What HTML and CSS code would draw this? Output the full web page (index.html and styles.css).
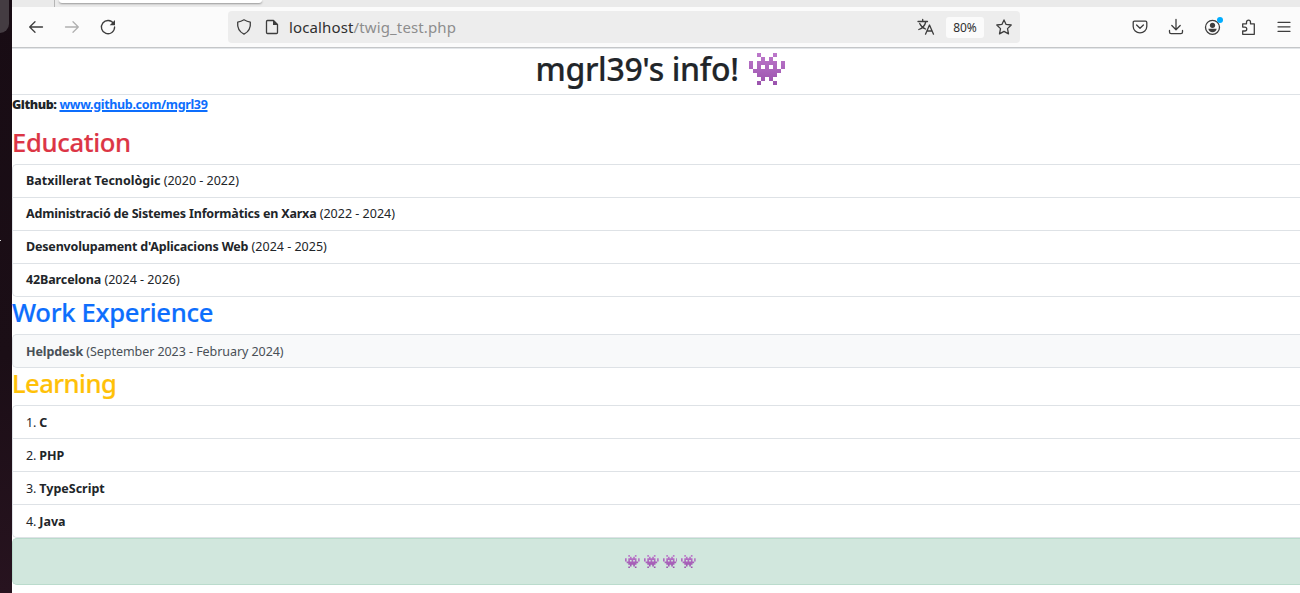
FILE: index.html
```html
<!DOCTYPE html>
<html lang="ca">
<head>
<meta charset="utf-8">
<title>mgrl39's info!</title>
<link rel="stylesheet" href="styles.css">
</head>
<body>
<svg class="defs" aria-hidden="true">
  <defs>
    <linearGradient id="purple" x1="0" y1="0" x2="0" y2="1"><stop offset="0" stop-color="#bd78cb"/><stop offset="1" stop-color="#9a52ad"/></linearGradient>
    <symbol id="invader" viewBox="0 0 9 8" preserveAspectRatio="none">
      <path fill="url(#purple)" d="M2 0h1v1h1v1h1v-1h1v-1h1v1h-1v1h1v2h1v-2h1v2h-1v1h-1v1h-1v1h1v1h-1v-1h-1v-1h-1v1h-1v1h-1v-1h1v-1h-1v-1h-1v-1h-1v-2h1v2h1v-2h1v-1h-1zM3 3v1h1v-1zM5 3v1h1v-1z"/>
    </symbol>
  </defs>
</svg>
<aside class="desktop"><span class="dock"></span><span class="speck"></span></aside>
<div class="browser">
  <div class="tabs"><span class="tab"></span></div>
  <nav class="toolbar">
    <div class="nav-buttons">
      <svg class="icon" viewBox="0 0 16 16"><path d="M14.500 8H2M7 2.700L1.700 8L7 13.300"/></svg>
      <svg class="icon disabled" viewBox="0 0 16 16"><path d="M1.500 8H14M9 2.700L14.300 8L9 13.300"/></svg>
      <svg class="icon" viewBox="0 0 16 16"><path d="M13.600 4.600A6.600 6.600 0 1 0 14.600 8"/><path class="solid" d="M15 1v5.300H9.700z"/></svg>
    </div>
    <div class="urlbar">
      <svg class="icon" viewBox="0 0 16 16"><path d="M8 .8Q11 2.600 14.300 3.100Q15.200 11.500 8 15.200Q.8 11.500 1.700 3.100Q5 2.600 8 .8z"/></svg>
      <svg class="icon page" viewBox="0 0 16 16"><path d="M3.500 1.500H9.500L13.500 5.500V13.500Q13.500 14.500 12.500 14.500H3.500Q2.500 14.500 2.500 13.500V2.500Q2.500 1.500 3.500 1.500z"/><path class="solid" d="M9 1l5 5H9z"/></svg>
      <span class="url"><span class="host">localhost</span>/twig_test.php</span>
      <svg class="icon translate" viewBox="0 0 16 16"><path d="M0 2.500H9.500M4.700 .5V2.500M1.700 4.500Q3.500 8.500 7.500 10M7.700 3Q6.500 8.500 .8 10.500M7.500 15.200L11.500 6L15.500 15.200M8.800 12H14.200"/></svg>
      <span class="zoom">80%</span>
      <svg class="icon" viewBox="0 0 16 16"><path d="M8 .9L10.100 5.400L15.200 6L11.500 9.600L12.500 14.900L8 12.400L3.500 14.900L4.500 9.600L.8 6L5.900 5.400z"/></svg>
    </div>
    <div class="actions">
      <svg class="icon" viewBox="0 0 16 16"><path d="M2.500 2.200H13.500Q14.800 2.200 14.800 3.500V7.500A6.800 6.300 0 0 1 1.200 7.500V3.500Q1.200 2.200 2.500 2.200zM4.600 6L8 9.200L11.400 6"/></svg>
      <svg class="icon" viewBox="0 0 16 16"><path d="M8 .5V10.500M3.800 6.500L8 10.700L12.200 6.500M1.500 11.500V13Q1.500 14.600 3.100 14.600H12.900Q14.500 14.600 14.500 13V11.500"/></svg>
      <span class="account"><svg class="icon" viewBox="0 0 16 16"><circle cx="8.500" cy="8.300" r="7"/><circle class="solid" cx="8.500" cy="6.300" r="2.600"/><path class="solid" d="M4.300 9.800H12.700Q12 13.200 8.500 13.200Q5 13.200 4.300 9.800z"/></svg><i class="badge"></i></span>
      <svg class="icon" viewBox="0 0 16 16"><path d="M2.700 15.300V12H4.800A1.900 1.900 0 0 0 4.800 8.100H2.700V4.800H6.500V3.200A2 2 0 0 1 10.500 3.200V4.800H14.300V15.300z"/></svg>
      <svg class="icon" viewBox="0 0 16 16"><path d="M2 3.300H14M2 7.800H14M2 12.300H14"/></svg>
    </div>
  </nav>
  <main>
    <h1 class="title"><span class="title-text">mgrl39's info!</span><svg class="alien-large"><use href="#invader"/></svg></h1>
    <p class="github"><b class="gh-label">Github:</b> <a class="gh-link" href="#">www.github.com/mgrl39</a></p>
    <h2 class="heading education">Education</h2>
    <ul class="list">
      <li><b>Batxillerat Tecnològic</b> <span>(2020 - 2022)</span></li>
      <li><b class="tight">Administració de Sistemes Informàtics en Xarxa</b> <span>(2022 - 2024)</span></li>
      <li><b class="tight">Desenvolupament d'Aplicacions Web</b> <span>(2024 - 2025)</span></li>
      <li><b class="snug">42Barcelona</b> <span>(2024 - 2026)</span></li>
    </ul>
    <h2 class="heading work">Work Experience</h2>
    <ul class="list light">
      <li><b class="snug">Helpdesk</b> <span class="period">(September 2023 - February 2024)</span></li>
    </ul>
    <h2 class="heading learning">Learning</h2>
    <ol class="list lower">
      <li><span class="num">1.</span> <b>C</b></li>
      <li><span class="num">2.</span> <b>PHP</b></li>
      <li><span class="num">3.</span> <b>TypeScript</b></li>
      <li><span class="num">4.</span> <b>Java</b></li>
    </ol>
    <div class="alert"><svg><use href="#invader"/></svg><svg><use href="#invader"/></svg><svg><use href="#invader"/></svg><svg><use href="#invader"/></svg></div>
  </main>
</div>
</body>
</html>
```
FILE: styles.css
```css
* { box-sizing: border-box; }
body { margin: 0; width: 1300px; height: 593px; display: flex; overflow: hidden; background: #fff; color: #212529; font: 12.5px/19px "Noto Sans", "Open Sans", sans-serif; }
.defs { position: absolute; width: 0; height: 0; }
.desktop { width: 12px; flex: none; background: linear-gradient(#180c14, #1b0e16 60%, #27131f); }
.dock { display: block; width: 9px; height: 33px; background: #443c42; border-radius: 0 0 9px 0; }
.speck { display: block; width: 1px; height: 1px; margin-top: 207px; background: #ddd; }
.browser { flex: 1; min-width: 0; }
.tabs { height: 7px; background: #eaeaea; padding-left: 42px; display: flex; }
.tabs::before { content: ""; width: 1px; background: #b5b5b5; margin-right: 4px; }
.tab { width: 203px; height: 3px; background: #fff; border-radius: 0 0 4px 4px; box-shadow: 0 1px 2px #999; }
.toolbar { height: 41px; background: #fbfbfb; border-bottom: 1px solid #c4c6c8; box-shadow: 0 1px #e3e6e9; display: flex; align-items: center; padding: 0 8px 0 16px; }
.icon { display: block; flex: none; width: 16px; height: 16px; overflow: visible; fill: none; stroke: #3d3d3d; stroke-width: 1.3; stroke-linecap: round; stroke-linejoin: round; }
.icon .solid { fill: #3d3d3d; stroke: none; }
.disabled { stroke: #b0b0b0; }
.nav-buttons { display: flex; gap: 20px; width: 200px; }
.urlbar { width: 792px; height: 32px; border-radius: 4px; background: #ededed; display: flex; align-items: center; padding: 0 8px; }
.page { margin-left: 12px; }
.url { flex: 1; margin-left: 9px; font-size: 15px; letter-spacing: .13px; color: #8d8d8d; }
.host { color: #303030; }
.zoom { width: 38px; height: 21px; margin: 0 12px; background: #fbfbfb; border-radius: 3px; text-align: center; font-size: 12px; line-height: 21px; color: #303030; }
.actions { display: flex; gap: 20px; margin-left: auto; }
.account { position: relative; }
.badge { position: absolute; right: -3px; top: -2px; width: 6px; height: 6px; border-radius: 50%; background: #00adff; }
h1, h2, p, ul, ol { margin: 0; padding: 0; font-weight: 400; }
h1, h2 { font-weight: 500; -webkit-text-stroke: .2px currentColor; }
.title { height: 47px; border-bottom: 1px solid #dee2e6; display: flex; justify-content: center; gap: 9px; padding-left: 8px; font-size: 32px; line-height: 41px; letter-spacing: -.34px; }
.alien-large { width: 36px; height: 32px; margin: 5px 0 0 1px; }
.github { height: 31px; font-weight: 700; letter-spacing: -.34px; }
.gh-label { letter-spacing: -.42px; }
.gh-link { color: #0d6efd; text-decoration-thickness: 2px; text-underline-offset: 1px; text-decoration-skip-ink: auto; }
.heading { height: 38px; font-size: 25.600px; line-height: 34px; }
.education { color: #dc3545; letter-spacing: -.34px; }
.work { color: #0d6efd; letter-spacing: -.28px; }
.learning { color: #ffc107; letter-spacing: -.55px; }
.list { margin-bottom: -1px; list-style: none; border: 1px solid #dee2e6; border-right: 0; border-radius: 5px 0 0 5px; }
.list li { height: 33px; padding-left: 13px; line-height: 32px; border-bottom: 1px solid #dee2e6; }
.list li:last-child { height: 32px; border-bottom: 0; }
.tight { letter-spacing: -.18px; }
.snug { letter-spacing: -.12px; }
.period { letter-spacing: -.06px; }
.num { letter-spacing: -.25px; }
.light { background: #f8f9fa; color: #495057; }
.light li, .lower li { padding-top: 1px; }
.lower { margin-bottom: 0; }
.alert { height: 47px; background: #d1e7dd; border: 1px solid #badbcc; border-right: 0; border-radius: 5px 0 0 5px; display: flex; justify-content: center; align-items: center; gap: 4px; padding-left: 8px; }
.alert svg { width: 14.800px; height: 13px; }
```
